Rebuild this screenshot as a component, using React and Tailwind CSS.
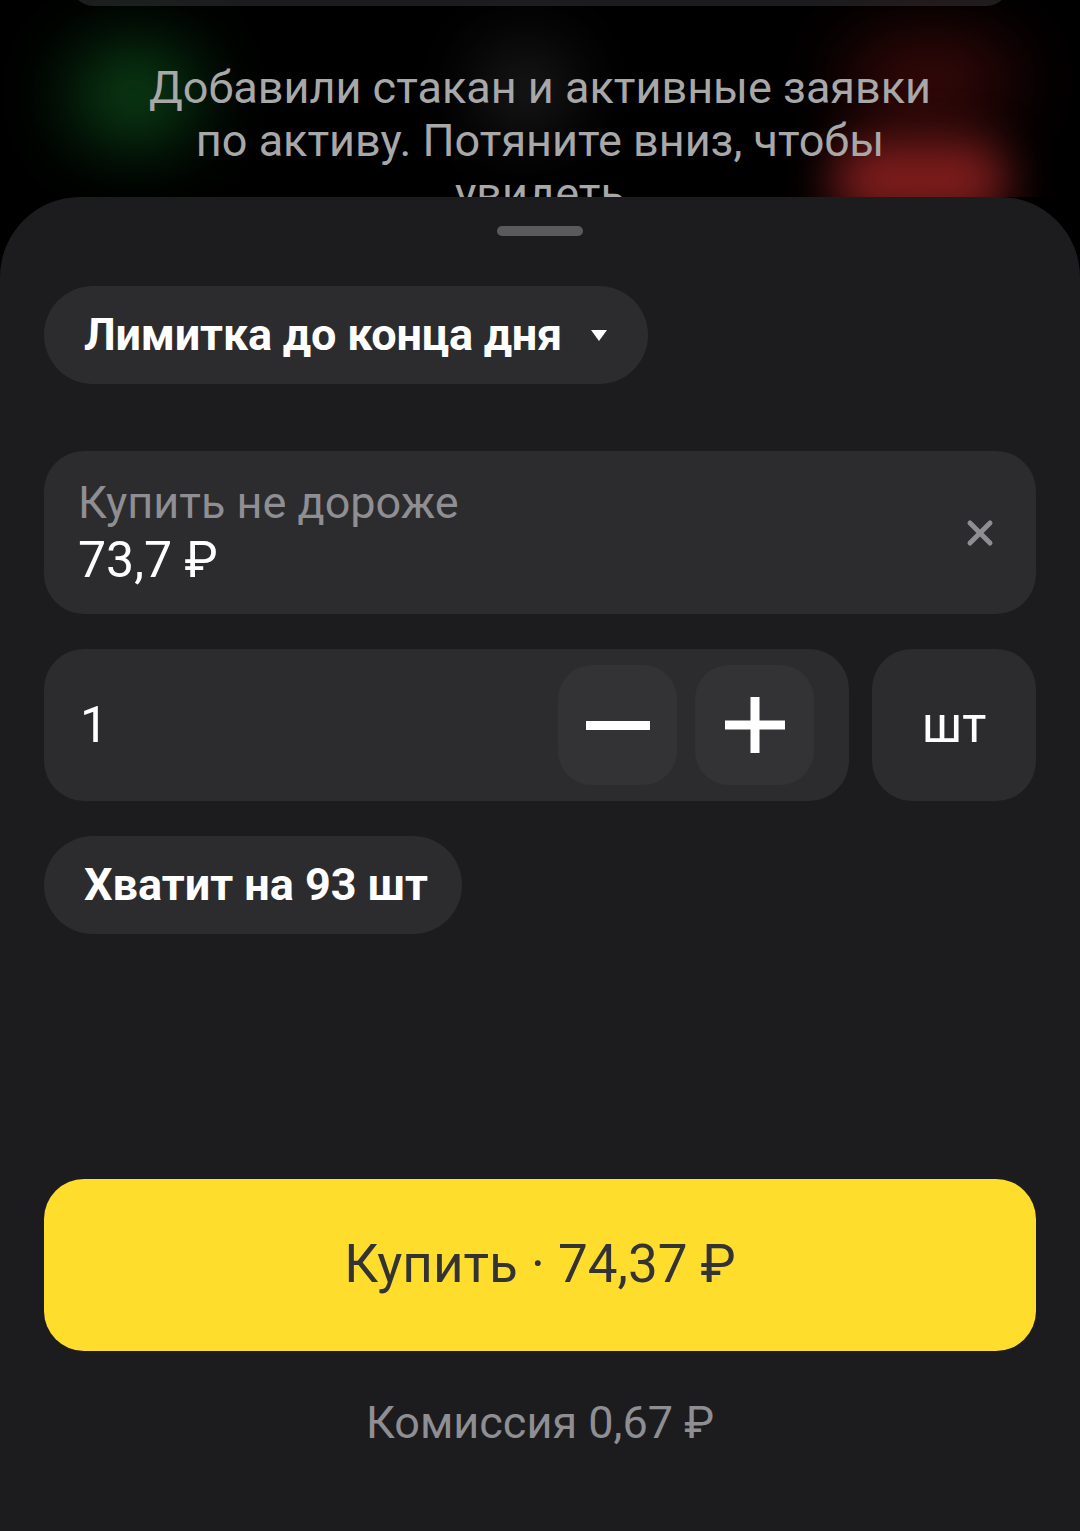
import { X } from 'lucide-react'

export default function App() {
  return (
    <div className="w-[1080px] h-[1531px] bg-black flex flex-col overflow-hidden font-['Roboto','Noto_Sans',sans-serif]">
      {/* Hint behind the sheet */}
      <div className="relative h-[197px] shrink-0 overflow-hidden">
        <div className="absolute left-[70px] right-[70px] -top-[20px] h-[26px] rounded-b-[24px] bg-[#1c1c1e]" />
        <div className="absolute left-[75px] top-[55px] w-[120px] h-[80px] rounded-full bg-[#147a2a] blur-2xl opacity-70" />
        <div className="absolute left-[490px] top-[60px] w-[70px] h-[60px] rounded-full bg-[#666] blur-2xl opacity-60" />
        <div className="absolute left-[850px] top-[50px] w-[160px] h-[60px] rounded-full bg-[#7a1414] blur-2xl opacity-70" />
        <div className="absolute left-[830px] top-[140px] w-[180px] h-[80px] rounded-full bg-[#a02424] blur-xl opacity-80" />
        <p className="relative pt-[61px] text-center text-[45px] leading-[53px] text-[#a8a8a8] px-[140px]">
          Добавили стакан и активные заявки по активу. Потяните вниз, чтобы увидеть
        </p>
      </div>

      {/* Bottom sheet */}
      <div className="flex-1 bg-[#1c1c1e] rounded-t-[80px] px-[44px] flex flex-col">
        <div className="mt-[29px] mx-auto w-[86px] h-[10px] rounded-full bg-[#5a5a5c]" />

        <button className="mt-[50px] self-start h-[98px] w-[604px] rounded-full bg-[#2c2c2e] flex items-center pl-[40px] gap-[28px]">
          <span className="text-[45px] font-bold text-white tracking-[-0.2px]">Лимитка до конца дня</span>
          <svg width="18" height="13" viewBox="0 0 18 13">
            <path d="M1 1 H17 L9 12 Z" fill="#fff" />
          </svg>
        </button>

        <div className="mt-[67px] h-[163px] rounded-[40px] bg-[#2c2c2e] flex items-center justify-between pl-[34px] pr-[36px]">
          <div className="flex flex-col">
            <span className="text-[45px] leading-[54px] text-[#8e8e93]">Купить не дороже</span>
            <span className="text-[50px] leading-[60px] text-white">73,7 ₽</span>
          </div>
          <X size={40} strokeWidth={3} className="text-[#8e8e93]" />
        </div>

        <div className="mt-[35px] flex gap-[23px]">
          <div className="flex-1 h-[152px] rounded-[40px] bg-[#2c2c2e] flex items-center pl-[36px] pr-[35px]">
            <span className="flex-1 text-[50px] text-white">1</span>
            <div className="flex gap-[18px]">
              <button className="w-[119px] h-[120px] rounded-[34px] bg-[#333335] flex items-center justify-center">
                <span className="block w-[64px] h-[9px] bg-white" />
              </button>
              <button className="w-[119px] h-[120px] rounded-[34px] bg-[#333335] flex items-center justify-center">
                <svg width="60" height="56" viewBox="0 0 60 56">
                  <rect x="0" y="23.5" width="60" height="9" fill="#fff" />
                  <rect x="25.5" y="0" width="9" height="56" fill="#fff" />
                </svg>
              </button>
            </div>
          </div>
          <div className="w-[164px] h-[152px] rounded-[40px] bg-[#2c2c2e] flex items-center justify-center">
            <span className="text-[50px] text-white">шт</span>
          </div>
        </div>

        <div className="mt-[35px] self-start h-[98px] w-[418px] rounded-full bg-[#2c2c2e] flex items-center pl-[40px]">
          <span className="text-[45px] font-bold text-white">Хватит на 93 шт</span>
        </div>

        <button className="mt-[245px] h-[172px] rounded-[40px] bg-[#ffdd2d] flex items-center justify-center">
          <span className="text-[53px] text-[#333333]">Купить · 74,37 ₽</span>
        </button>

        <p className="mt-[38px] text-center text-[45px] text-[#8e8e93]">Комиссия 0,67 ₽</p>
      </div>
    </div>
  )
}
